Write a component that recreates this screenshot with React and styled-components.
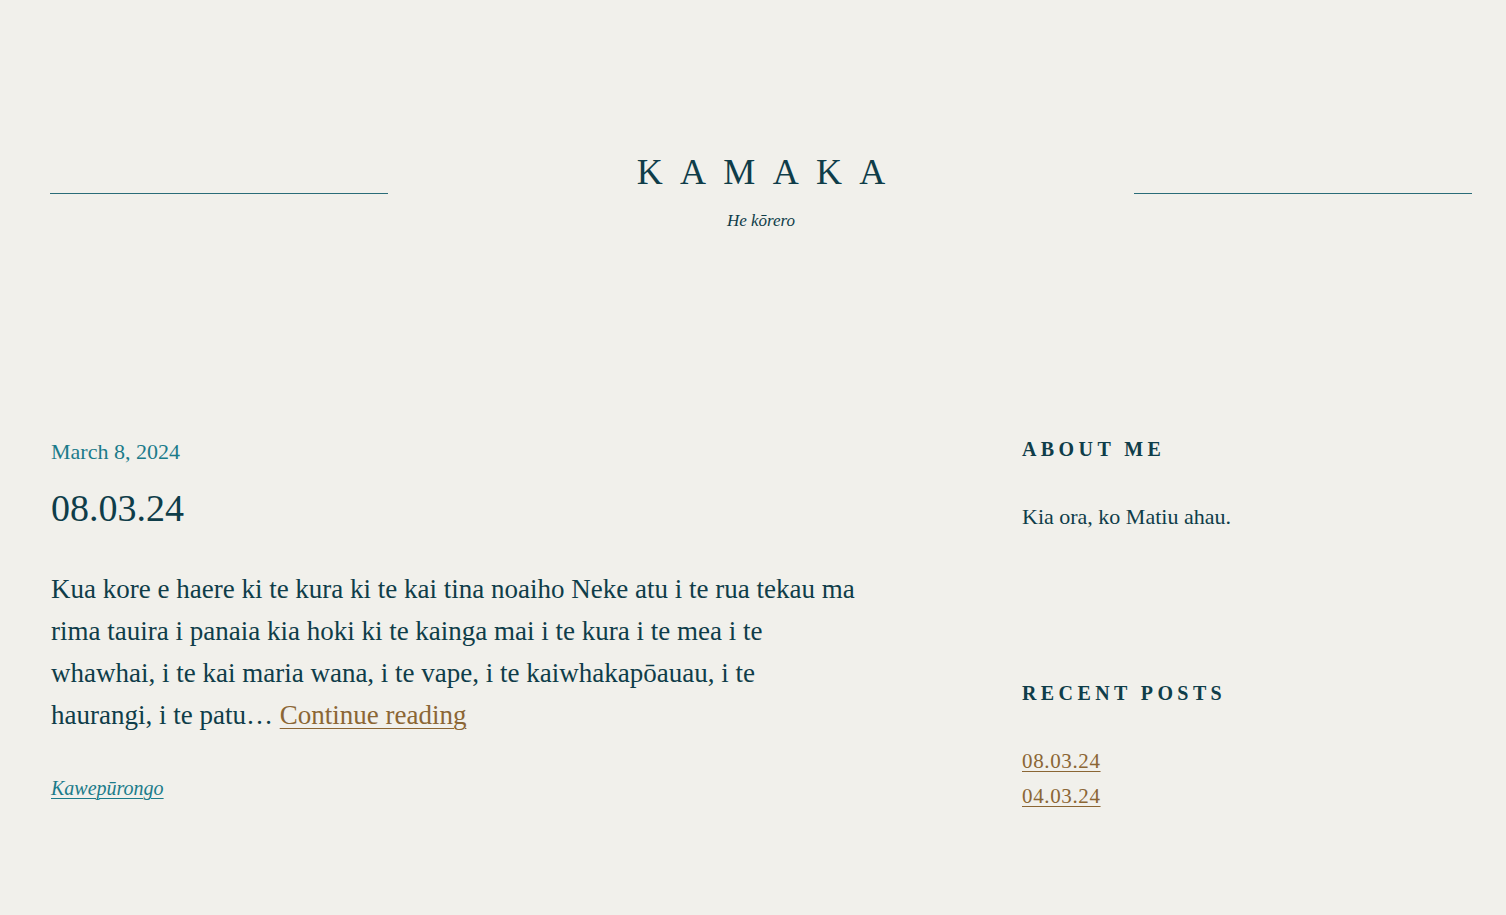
import React from "react";
import styled, { createGlobalStyle } from "styled-components";

const Global = createGlobalStyle`
  html, body { margin: 0; padding: 0; }
  body {
    background: #f1f0eb;
    font-family: "Liberation Serif", "DejaVu Serif", serif;
    color: #0f3d49;
  }
`;

const Page = styled.div`
  min-height: 915px;
  padding: 0 34px 0 50px;
`;

const Header = styled.header`
  display: grid;
  grid-template-columns: 338px 1fr 338px;
  align-items: start;
  padding-top: 150px;
`;

const Rule = styled.div`
  height: 1px;
  background: #2a6c78;
  margin-top: 43px;
`;

const Brand = styled.div`
  display: flex;
  flex-direction: column;
  align-items: center;
`;

const SiteTitle = styled.h1`
  margin: 0;
  font-weight: 400;
  font-size: 36px;
  line-height: 44px;
  letter-spacing: 0.48em;
  margin-right: -0.48em;
  color: #0f3d49;
`;

const Tagline = styled.p`
  margin: 16px 0 0;
  font-style: italic;
  font-size: 17px;
  line-height: 22px;
  color: #0f3d49;
`;

const Main = styled.div`
  display: flex;
  margin-top: 203px;
`;

const Content = styled.main`
  width: 807px;
  padding-top: 3px;
  padding-left: 1px;
`;

const DateLine = styled.div`
  font-size: 22px;
  line-height: 28px;
  color: #1b7b8a;
`;

const PostTitle = styled.h2`
  margin: 20px 0 0;
  font-weight: 400;
  font-size: 38px;
  line-height: 44px;
  color: #0f3d49;
`;

const Excerpt = styled.p`
  margin: 38px 0 0;
  font-size: 27px;
  line-height: 42px;
  color: #0f3d49;
`;

const MoreLink = styled.a`
  color: #8b6634;
  text-decoration: underline;
  text-underline-offset: 4px;
  text-decoration-thickness: 1px;
`;

const Category = styled.a`
  display: inline-block;
  margin-top: 38px;
  font-style: italic;
  font-size: 20px;
  line-height: 28px;
  color: #1b7b8a;
  text-decoration: underline;
  text-underline-offset: 3px;
  text-decoration-thickness: 1px;
`;

const Sidebar = styled.aside`
  margin-left: auto;
  width: 450px;
`;

const Widget = styled.section`
  & + & { margin-top: 148px; }
`;

const WidgetTitle = styled.h3`
  margin: 0;
  font-size: 20px;
  line-height: 28px;
  font-weight: 700;
  letter-spacing: 0.22em;
  color: #0f3d49;
`;

const WidgetText = styled.p`
  margin: 40px 0 0;
  font-size: 22px;
  line-height: 28px;
`;

const PostList = styled.ul`
  list-style: none;
  margin: 37px 0 0;
  padding: 0;
`;

const PostItem = styled.li`
  font-size: 21px;
  line-height: 35px;
  letter-spacing: 0.03em;
`;

const PostLink = styled.a`
  color: #8b6634;
  text-decoration: underline;
  text-underline-offset: 3px;
  text-decoration-thickness: 1px;
`;

export default function App() {
  return (
    <>
      <Global />
      <Page>
        <Header>
          <Rule />
          <Brand>
            <SiteTitle>KAMAKA</SiteTitle>
            <Tagline>He kōrero</Tagline>
          </Brand>
          <Rule />
        </Header>
        <Main>
          <Content>
            <DateLine>March 8, 2024</DateLine>
            <PostTitle>08.03.24</PostTitle>
            <Excerpt>
              Kua kore e haere ki te kura ki te kai tina noaiho Neke atu i te rua tekau ma rima tauira i panaia kia hoki ki te kainga mai i te kura i te mea i te whawhai, i te kai maria wana, i te vape, i te kaiwhakapōauau, i te haurangi, i te patu…{" "}
              <MoreLink href="#">Continue reading</MoreLink>
            </Excerpt>
            <Category href="#">Kawepūrongo</Category>
          </Content>
          <Sidebar>
            <Widget>
              <WidgetTitle>ABOUT ME</WidgetTitle>
              <WidgetText>Kia ora, ko Matiu ahau.</WidgetText>
            </Widget>
            <Widget>
              <WidgetTitle>RECENT POSTS</WidgetTitle>
              <PostList>
                <PostItem><PostLink href="#">08.03.24</PostLink></PostItem>
                <PostItem><PostLink href="#">04.03.24</PostLink></PostItem>
              </PostList>
            </Widget>
          </Sidebar>
        </Main>
      </Page>
    </>
  );
}
